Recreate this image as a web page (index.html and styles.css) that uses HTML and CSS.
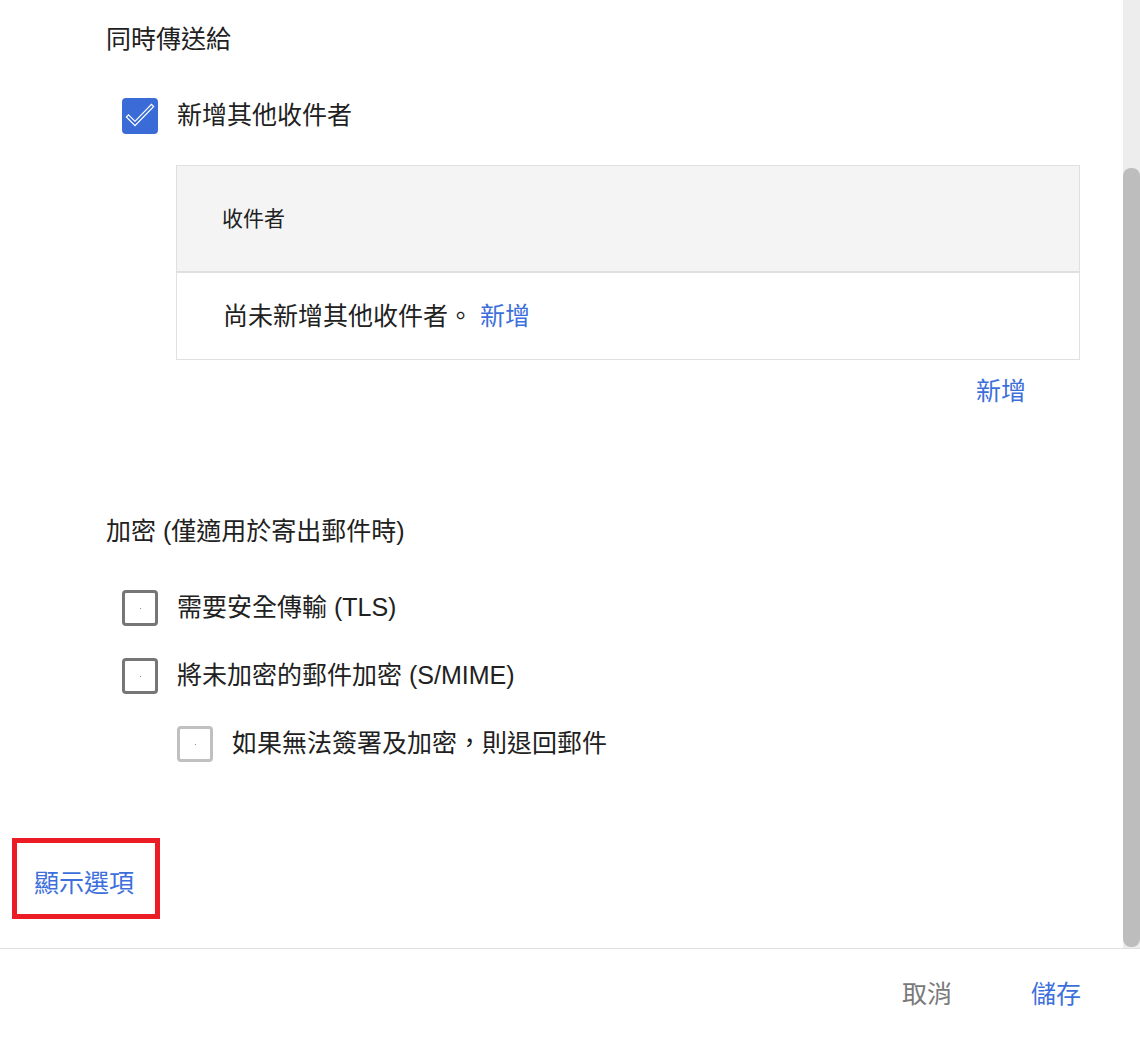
FILE: index.html
```html
<!DOCTYPE html>
<html lang="zh-Hant">
<head>
<meta charset="utf-8">
<link rel="stylesheet" href="styles.css">
</head>
<body>
<div class="page">
  <div class="scroll">
    <div class="content">
      <div class="block">
        <h2 class="section-title">同時傳送給</h2>
        <label class="check-row">
          <span class="box checked">
            <svg width="36" height="36" viewBox="0 0 36 36"><polyline points="6.5,19 13,25.5 29.5,8.5" fill="none" stroke="#fff" stroke-width="4.2" stroke-linecap="square" stroke-linejoin="miter"/><polyline points="6.5,19 13,25.5 29.5,8.5" fill="none" stroke="#3a6bd7" stroke-width="1.8" stroke-linecap="square" stroke-linejoin="miter"/></svg>
          </span>
          <span class="label">新增其他收件者</span>
        </label>
        <div class="table">
          <div class="thead">收件者</div>
          <div class="tbody">尚未新增其他收件者。 <a class="link">新增</a></div>
        </div>
        <div class="add-row"><a class="link">新增</a></div>

        <h2 class="section-title enc">加密 (僅適用於寄出郵件時)</h2>
        <label class="check-row">
          <span class="box"><i class="dot"></i></span>
          <span class="label">需要安全傳輸 (TLS)</span>
        </label>
        <label class="check-row next">
          <span class="box"><i class="dot"></i></span>
          <span class="label">將未加密的郵件加密 (S/MIME)</span>
        </label>
        <label class="check-row next nested">
          <span class="box disabled"><i class="dot"></i></span>
          <span class="label">如果無法簽署及加密，則退回郵件</span>
        </label>
      </div>
      <div class="options"><a class="link">顯示選項</a></div>
    </div>
    <div class="scrollbar"><div class="thumb"></div></div>
  </div>
  <div class="footer">
    <button class="btn cancel">取消</button>
    <button class="btn save">儲存</button>
  </div>
</div>
</body>
</html>
```

FILE: styles.css
```css
html, body {
  margin: 0;
  padding: 0;
  background: #fff;
}
body {
  font-family: "Liberation Sans", "Noto Sans CJK TC", sans-serif;
  color: #212121;
}
.page {
  width: 1140px;
  height: 1037px;
  display: flex;
  flex-direction: column;
  overflow: hidden;
}
.scroll {
  height: 948px;
  display: flex;
  flex: none;
}
.content {
  flex: 1;
  padding-top: 23px;
}
.block {
  padding: 0 43px 0 106px;
}
.section-title {
  margin: 0;
  font-size: 25px;
  line-height: 32px;
  font-weight: normal;
}
.section-title.enc {
  margin-top: 108px;
}
.check-row {
  display: flex;
  align-items: center;
  gap: 19px;
  margin: 43px 0 0 16px;
  height: 36px;
  font-size: 25px;
}
.check-row.next {
  margin-top: 32px;
}
.check-row.nested {
  margin-left: 71px;
}
.box {
  width: 36px;
  height: 36px;
  box-sizing: border-box;
  border: 3px solid #767676;
  border-radius: 4px;
  display: flex;
  align-items: center;
  justify-content: center;
  flex: none;
}
.box.checked {
  border: none;
  background: #3a6bd7;
  border-radius: 4px;
}
.box.checked svg {
  display: block;
}
.box.disabled {
  border-color: #c0c0c0;
}
.dot {
  width: 1px;
  height: 1px;
  background: #8a8a8a;
}
.label {
  line-height: 32px;
  padding-bottom: 2px;
}
.table {
  margin: 31px 0 0 70px;
  border: 1px solid #e0e0e0;
}
.thead {
  height: 105px;
  box-sizing: border-box;
  padding: 0 0 4px 45px;
  background: #f4f4f4;
  border-bottom: 2px solid #e0e0e0;
  display: flex;
  align-items: center;
  font-size: 21px;
  height: 107px;
}
.tbody {
  height: 86px;
  box-sizing: border-box;
  padding: 0 0 5px 46px;
  display: flex;
  align-items: center;
  font-size: 25px;
  white-space: pre;
}
.link {
  color: #3d6fdc;
  cursor: pointer;
}
.add-row {
  margin-top: 15px;
  display: flex;
  justify-content: flex-end;
  padding-right: 54px;
  font-size: 25px;
  line-height: 32px;
}
.options {
  margin: 76px 0 0 12px;
  width: 148px;
  height: 81px;
  box-sizing: border-box;
  border: 5px solid #ec1c24;
  padding: 24px 0 0 17px;
  font-size: 25px;
  line-height: 32px;
}
.scrollbar {
  width: 17px;
  flex: none;
  background: #ededed;
  display: flex;
  flex-direction: column;
}
.thumb {
  margin-top: 168px;
  height: 779px;
  background: #bdbdbd;
  border-radius: 8px;
}
.footer {
  border-top: 1px solid #e0e0e0;
  flex: 1;
  display: flex;
  justify-content: flex-end;
  align-items: center;
  gap: 79px;
  padding-right: 59px;
  padding-top: 2px;
}
.btn {
  background: none;
  border: none;
  padding: 0;
  font-family: inherit;
  font-size: 25px;
  line-height: 32px;
  cursor: pointer;
}
.btn.cancel {
  color: #7a7a7a;
}
.btn.save {
  color: #3d6fdc;
}
```
